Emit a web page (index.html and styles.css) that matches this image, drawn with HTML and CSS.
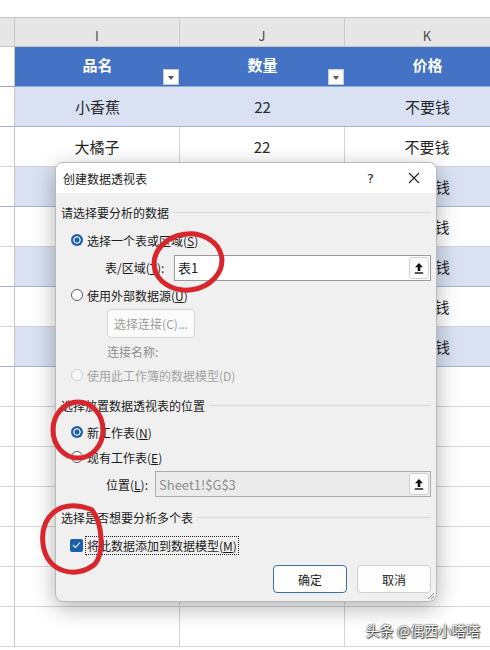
FILE: index.html
```html
<!DOCTYPE html>
<html lang="zh-CN">
<head>
  <meta charset="UTF-8" />
  <title>创建数据透视表</title>
  <link rel="stylesheet" href="styles.css">
</head>
<body>
  <!-- Worksheet -->
  <div class="sheet">
    <div class="topbar"></div>
    <div class="row colhead">
      <div class="rh"></div>
      <div class="c">I</div>
      <div class="c">J</div>
      <div class="c">K</div>
    </div>
    <div class="row thead">
      <div class="rh"></div>
      <div class="c">品名<span class="filter"></span></div>
      <div class="c">数量<span class="filter"></span></div>
      <div class="c">价格</div>
    </div>
    <div class="row band"><div class="rh"></div><div class="c">小香蕉</div><div class="c">22</div><div class="c">不要钱</div></div>
    <div class="row"><div class="rh"></div><div class="c">大橘子</div><div class="c">22</div><div class="c">不要钱</div></div>
    <div class="row band"><div class="rh"></div><div class="c">红苹果</div><div class="c">22</div><div class="c">不要钱</div></div>
    <div class="row"><div class="rh"></div><div class="c">大西瓜</div><div class="c">22</div><div class="c">不要钱</div></div>
    <div class="row band"><div class="rh"></div><div class="c">小葡萄</div><div class="c">22</div><div class="c">不要钱</div></div>
    <div class="row"><div class="rh"></div><div class="c">水蜜桃</div><div class="c">22</div><div class="c">不要钱</div></div>
    <div class="row band"><div class="rh"></div><div class="c">甜柚子</div><div class="c">22</div><div class="c">不要钱</div></div>
    <div class="row"><div class="rh"></div><div class="c"></div><div class="c"></div><div class="c"></div></div>
    <div class="row"><div class="rh"></div><div class="c"></div><div class="c"></div><div class="c"></div></div>
    <div class="row"><div class="rh"></div><div class="c"></div><div class="c"></div><div class="c"></div></div>
    <div class="row"><div class="rh"></div><div class="c"></div><div class="c"></div><div class="c"></div></div>
    <div class="row"><div class="rh"></div><div class="c"></div><div class="c"></div><div class="c"></div></div>
    <div class="row"><div class="rh"></div><div class="c"></div><div class="c"></div><div class="c"></div></div>
    <div class="row"><div class="rh"></div><div class="c"></div><div class="c"></div><div class="c"></div></div>
  </div>

  <!-- Dialog -->
  <div class="dialog">
    <div class="titlebar">
      <span class="title">创建数据透视表</span>
      <span class="help">?</span>
      <svg class="close" width="12" height="12" viewBox="0 0 12 12"><path d="M1 1 L11 11 M11 1 L1 11" stroke="#222" stroke-width="1.1"/></svg>
    </div>

    <div class="body">
      <div class="heading"><span>请选择要分析的数据</span><span class="rule"></span></div>

      <div class="opt r1"><span class="radio on"></span><span>选择一个表或区域(<u>S</u>)</span></div>
      <div class="field r2">
        <span class="label lbl-range">表/区域(<u>T</u>):</span>
        <div class="input">
          <span>表1</span>
          <span class="ref"><svg width="10" height="12" viewBox="0 0 10 12"><path d="M5 1 L1 5.2 H3.7 V9 H6.3 V5.2 H9 Z" fill="#111"/><rect x="0.8" y="10.3" width="8.4" height="1.4" fill="#111"/></svg></span>
        </div>
      </div>

      <div class="opt r3"><span class="radio"></span><span>使用外部数据源(<u>U</u>)</span></div>
      <button class="btn-conn" type="button">选择连接(C)...</button>
      <div class="conn-name">连接名称:</div>
      <div class="opt r4 disabled"><span class="radio"></span><span>使用此工作簿的数据模型(D)</span></div>

      <div class="heading h2"><span>选择放置数据透视表的位置</span><span class="rule"></span></div>
      <div class="opt r5"><span class="radio on"></span><span>新工作表(<u>N</u>)</span></div>
      <div class="opt r6"><span class="radio"></span><span>现有工作表(<u>E</u>)</span></div>
      <div class="field r7">
        <span class="label lbl-pos">位置(<u>L</u>):</span>
        <div class="input off">
          <span>Sheet1!$G$3</span>
          <span class="ref"><svg width="10" height="12" viewBox="0 0 10 12"><path d="M5 1 L1 5.2 H3.7 V9 H6.3 V5.2 H9 Z" fill="#111"/><rect x="0.8" y="10.3" width="8.4" height="1.4" fill="#111"/></svg></span>
        </div>
      </div>

      <div class="heading h3"><span>选择是否想要分析多个表</span><span class="rule"></span></div>
      <div class="opt r8">
        <span class="check"><svg width="9" height="8" viewBox="0 0 9 8"><path d="M1 4.2 L3.4 6.5 L8 1.5" stroke="#fff" stroke-width="1.1" fill="none"/></svg></span>
        <span class="focus">将此数据添加到数据模型(<u>M</u>)</span>
      </div>

      <div class="actions">
        <button class="btn primary" type="button">确定</button>
        <button class="btn" type="button">取消</button>
      </div>
    </div>

    <svg class="grip" width="9" height="9" viewBox="0 0 9 9"><path d="M8 2 L2 8 M8 5 L5 8" stroke="#888" stroke-width="1"/></svg>
  </div>

  <!-- Red marker annotations -->
  <svg class="marks" width="490" height="650" viewBox="0 0 490 650">
    <ellipse cx="188" cy="262" rx="34" ry="28" transform="rotate(-8 188 262)"/>
    <ellipse cx="78" cy="430" rx="25" ry="28"/>
    <path d="M90 509 C58 498 40 518 43 544 C46 572 76 580 95 564 C104 553 103 524 92 510"/>
  </svg>

  <div class="watermark">头条 @偶西小嗒嗒</div>
</body>
</html>
```

FILE: styles.css
```css
body {
  margin: 0;
  width: 490px;
  height: 650px;
  overflow: hidden;
  position: relative;
  background: #fff;
  font-family: "Noto Sans CJK SC", "Noto Sans", sans-serif;
  color: #1b1b1b;
}

/* ---- worksheet ---- */

.sheet {
  width: 490px;
}

.topbar {
  height: 18px;
  border-bottom: 1px solid #c6c6c6;
  box-sizing: border-box;
}

.row {
  display: grid;
  grid-template-columns: 15px 165px 165px 165px;
  height: 40px;
  box-sizing: border-box;
  border-bottom: 1px solid #d4d4d4;
}

.row .c {
  display: flex;
  align-items: center;
  justify-content: center;
  font-size: 15px;
  color: #262626;
  border-right: 1px solid #d4d4d4;
  position: relative;
}

.rh {
  background: #fff;
  border-right: 1px solid #c6c6c6;
}

.colhead {
  height: 29px;
  background: #e6e6e6;
  border-bottom: 1px solid #c6c6c6;
}

.colhead .c {
  font-size: 13px;
  color: #4a4a4a;
  border-right: 1px solid #cacaca;
  padding-top: 6px;
  box-sizing: border-box;
}

.colhead .rh {
  background: #e6e6e6;
}

.thead {
  border-bottom: 1px solid #8ea9db;
}

.thead .c {
  background: #4472c4;
  color: #fff;
  font-weight: bold;
  border-right: none;
  padding-bottom: 4px;
  box-sizing: border-box;
}

.filter {
  position: absolute;
  right: 1px;
  bottom: 1px;
  width: 16px;
  height: 16px;
  background: #fff;
  border: 1px solid #c9c9c9;
  box-sizing: border-box;
}

.filter::after {
  content: "";
  position: absolute;
  left: 4px;
  top: 6px;
  border-left: 3.5px solid transparent;
  border-right: 3.5px solid transparent;
  border-top: 4px solid #555;
}

.band {
  border-bottom: 1px solid #9eb5de;
}

.band .c {
  background: #d9e1f2;
  border-right: none;
}

/* ---- dialog ---- */

.dialog {
  position: absolute;
  left: 55px;
  top: 162px;
  width: 382px;
  height: 440px;
  box-sizing: border-box;
  background: #f0f0f0;
  border: 1px solid #b9b9b9;
  border-radius: 8px;
  box-shadow: 0 6px 22px rgba(0, 0, 0, 0.3);
  font-size: 12px;
}

.titlebar {
  height: 30px;
  background: #fff;
  border-radius: 7px 7px 0 0;
  display: flex;
  align-items: center;
  padding-left: 7px;
}

.title {
  flex: 1;
}

.help {
  font-family: "DejaVu Sans", sans-serif;
  font-size: 13px;
  margin-right: 34px;
}

.close {
  margin-right: 16px;
}

.body {
  padding: 5px 5px 0 5px;
}

.heading {
  display: flex;
  align-items: center;
  height: 28px;
  gap: 4px;
}

.rule {
  flex: 1;
  height: 1px;
  background: #d8d8d8;
}

.h2 {
  margin-top: 5px;
}

.h3 {
  margin-top: 6px;
}

.opt {
  display: flex;
  align-items: center;
  gap: 4px;
  padding-left: 10px;
}

.r1 { height: 28px; }
.r3 { height: 28px; }
.r4 { height: 22px; }
.r5 { height: 26px; }
.r6 { height: 24px; }
.r8 { height: 22px; margin-top: 3px; gap: 2px; padding-left: 9px; }

.radio {
  width: 12px;
  height: 12px;
  border-radius: 50%;
  box-sizing: border-box;
  border: 1px solid #5a5a5a;
  background: #fff;
}

.radio.on {
  border: none;
  background: radial-gradient(circle, #1b5fae 0 2.3px, #fff 2.8px 3.4px, #1b5fae 3.9px);
}

.disabled {
  color: #a2a2a2;
}

.disabled .radio {
  border-color: #cdcdcd;
  background: #f7f7f7;
}

.field {
  display: flex;
  align-items: center;
  height: 27px;
}

.r7 {
  height: 26px;
  margin-top: 2px;
}

.label {
  box-sizing: border-box;
  padding-left: 44px;
}

.lbl-range { width: 113px; }
.lbl-pos { width: 94px; padding-left: 45px; }

.input {
  flex: 1;
  height: 26px;
  box-sizing: border-box;
  background: #fff;
  border: 1px solid #9a9a9a;
  display: flex;
  align-items: center;
  justify-content: space-between;
  padding-left: 3px;
  font-size: 13px;
}

.input.off {
  background: #ebebeb;
  border-color: #ababab;
  color: #8e8e8e;
}

.ref {
  width: 20px;
  height: 22px;
  margin-right: 1px;
  box-sizing: border-box;
  background: #fbfbfb;
  border: 1px solid #d2d2d2;
  border-radius: 3px;
  display: flex;
  align-items: center;
  justify-content: center;
}

.btn-conn {
  display: block;
  margin-left: 46px;
  width: 88px;
  height: 29px;
  background: #fbfbfb;
  border: 1px solid #d5d5d5;
  border-radius: 4px;
  font-family: inherit;
  font-size: 12px;
  color: #9c9c9c;
  padding: 0;
}

.conn-name {
  height: 25px;
  line-height: 25px;
  margin-top: 1px;
  padding-left: 46px;
  color: #8c8c8c;
}

.check {
  width: 13px;
  height: 13px;
  border-radius: 2px;
  background: #1b5fae;
  display: flex;
  align-items: center;
  justify-content: center;
}

.focus {
  border: 1px dotted #222;
  padding: 0 1px;
  line-height: 17px;
}

.actions {
  display: flex;
  justify-content: flex-end;
  gap: 10px;
  margin-top: 9px;
}

.btn {
  width: 74px;
  height: 28px;
  background: #fdfdfd;
  border: 1px solid #d0d0d0;
  border-radius: 4px;
  font-family: inherit;
  font-size: 12px;
  color: #1b1b1b;
  padding: 0;
}

.btn.primary {
  border-color: #3f6f9f;
}

.grip {
  position: absolute;
  right: 1px;
  bottom: 1px;
}

/* ---- overlays ---- */

.marks {
  position: absolute;
  left: 0;
  top: 0;
  pointer-events: none;
}

.marks ellipse,
.marks path {
  fill: none;
  stroke: #d9262c;
  stroke-width: 5;
  stroke-linecap: round;
}

.watermark {
  position: absolute;
  right: 10px;
  bottom: 10px;
  font-size: 14px;
  color: #fff;
  text-shadow: 0 0 1px #333, 0 0 2px #333, 1px 1px 1px #444;
}
```
